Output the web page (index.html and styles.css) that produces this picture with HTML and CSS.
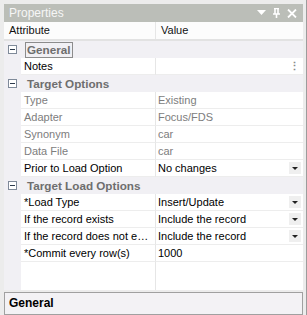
FILE: index.html
```html
<!DOCTYPE html>
<html>
<head>
    <meta name="viewport" content="width=device-width, initial-scale=1">
    <link rel="stylesheet" href="styles.css">
</head>
<body>

<div class="panel">
    <div class="titlebar">
        <span class="title">Properties</span>
        <span class="tools">
            <svg width="9" height="6" viewBox="0 0 9 6"><path d="M0 0H9L4.5 5Z" fill="#fff"/></svg>
            <svg width="9" height="10" viewBox="0 0 9 10"><path d="M2 0.5H7M3 0.5V6M6 0.5V6M1 6H8M4.5 6V10" stroke="#fff" stroke-width="1.6" fill="none"/></svg>
            <svg width="10" height="9" viewBox="0 0 10 9"><path d="M1 0.5L9 8.5M9 0.5L1 8.5" stroke="#fff" stroke-width="1.8"/></svg>
        </span>
    </div>

    <div class="grid">
        <div class="head">
            <div class="hcell attr">Attribute</div>
            <div class="hcell">Value</div>
        </div>

        <div class="cat"><span class="box"></span><span class="cat-name focus">General</span></div>
        <div class="row">
            <div class="name">Notes</div>
            <div class="val"><span class="dots">&#8942;</span></div>
        </div>

        <div class="cat"><span class="box"></span><span class="cat-name">Target Options</span></div>
        <div class="row ro"><div class="name">Type</div><div class="val">Existing</div></div>
        <div class="row ro"><div class="name">Adapter</div><div class="val">Focus/FDS</div></div>
        <div class="row ro"><div class="name">Synonym</div><div class="val">car</div></div>
        <div class="row ro"><div class="name">Data File</div><div class="val">car</div></div>
        <div class="row"><div class="name">Prior to Load Option</div><div class="val">No changes<span class="drop"></span></div></div>

        <div class="cat"><span class="box"></span><span class="cat-name">Target Load Options</span></div>
        <div class="row"><div class="name">*Load Type</div><div class="val">Insert/Update<span class="drop"></span></div></div>
        <div class="row"><div class="name">If the record exists</div><div class="val">Include the record<span class="drop"></span></div></div>
        <div class="row"><div class="name">If the record does not e&hellip;</div><div class="val">Include the record<span class="drop"></span></div></div>
        <div class="row"><div class="name">*Commit every row(s)</div><div class="val">1000</div></div>

        <div class="row empty"><div class="name"></div><div class="val"></div></div>
    </div>

    <div class="desc">
        <div class="desc-title">General</div>
    </div>
</div>

</body>
</html>
```

FILE: styles.css
```css
/* property grid panel */
body {
    margin: 0;
    font-family: "Liberation Sans", Arial, sans-serif;
    font-size: 11px;
    background: #ffffff;
}

.panel {
    width: 307px;
    height: 315px;
    box-sizing: border-box;
    padding: 4px 3px 0 4px;
    background: #ececec;
    border-right: 1px solid #9c9c9c;
    display: flex;
    flex-direction: column;
    overflow: hidden;
}

.titlebar {
    height: 18px;
    background: #bbbeb8;
    display: flex;
    align-items: center;
    justify-content: space-between;
    padding: 0 6px 0 5px;
    flex: none;
}

.title {
    color: #f6f6f6;
    font-size: 12px;
}

.tools {
    display: flex;
    align-items: center;
    gap: 6px;
}

.grid {
    background: #fafafc;
    flex: none;
}

.head {
    display: flex;
    height: 17px;
    border-bottom: 2px solid #e2e2e2;
    background: #fcfcfc;
}

.hcell {
    line-height: 17px;
    color: #111;
    padding-left: 5px;
}

.hcell.attr {
    width: 146px;
    border-right: 1px solid #e6e6e6;
}

.cat {
    height: 17px;
    display: flex;
    align-items: center;
    background: #f1f0f4;
}

.box {
    width: 7px;
    height: 7px;
    border: 1px solid #7f8a99;
    margin: 0 8px 0 4px;
    position: relative;
    background: #fff;
}

.box::after {
    content: "";
    position: absolute;
    left: 1px;
    top: 3px;
    width: 5px;
    height: 1px;
    background: #2c3a4c;
}

.cat-name {
    font-weight: bold;
    font-size: 11.7px;
    color: #6e6e6e;
    padding: 0 1px;
    line-height: 14px;
    border: 1px solid transparent;
}

.cat-name.focus {
    border: 1px solid #8c8c8c;
}

.row {
    display: flex;
    height: 17px;
    background: #f1f0f4;
}

.name {
    width: 131px;
    margin-left: 17px;
    background: #ffffff;
    border-bottom: 1px solid #ededed;
    border-right: 1px solid #e6e6e6;
    line-height: 16px;
    padding-left: 3px;
    white-space: nowrap;
    overflow: hidden;
    color: #000;
}

.val {
    flex: 1;
    background: #ffffff;
    border-bottom: 1px solid #ededed;
    line-height: 16px;
    padding-left: 2px;
    position: relative;
    color: #000;
}

.ro .name,
.ro .val {
    color: #7d7d7d;
}

.empty {
    height: 28px;
}

.empty .name,
.empty .val {
    border-bottom: none;
}

.dots {
    position: absolute;
    right: 3px;
    top: 0;
    color: #8a8a8a;
    font-weight: bold;
}

.drop {
    position: absolute;
    right: 2px;
    top: 2px;
    width: 12px;
    height: 12px;
    background: #efefef;
}

.drop::after {
    content: "";
    position: absolute;
    left: 3px;
    top: 5px;
    border-left: 3px solid transparent;
    border-right: 3px solid transparent;
    border-top: 3px solid #222;
}

.desc {
    margin-top: 2px;
    flex: 1;
    border: 1px solid #a0a0a0;
    background: #f3f2f5;
    padding: 3px 4px;
}

.desc-title {
    font-weight: bold;
    font-size: 12px;
    color: #000;
}
```
